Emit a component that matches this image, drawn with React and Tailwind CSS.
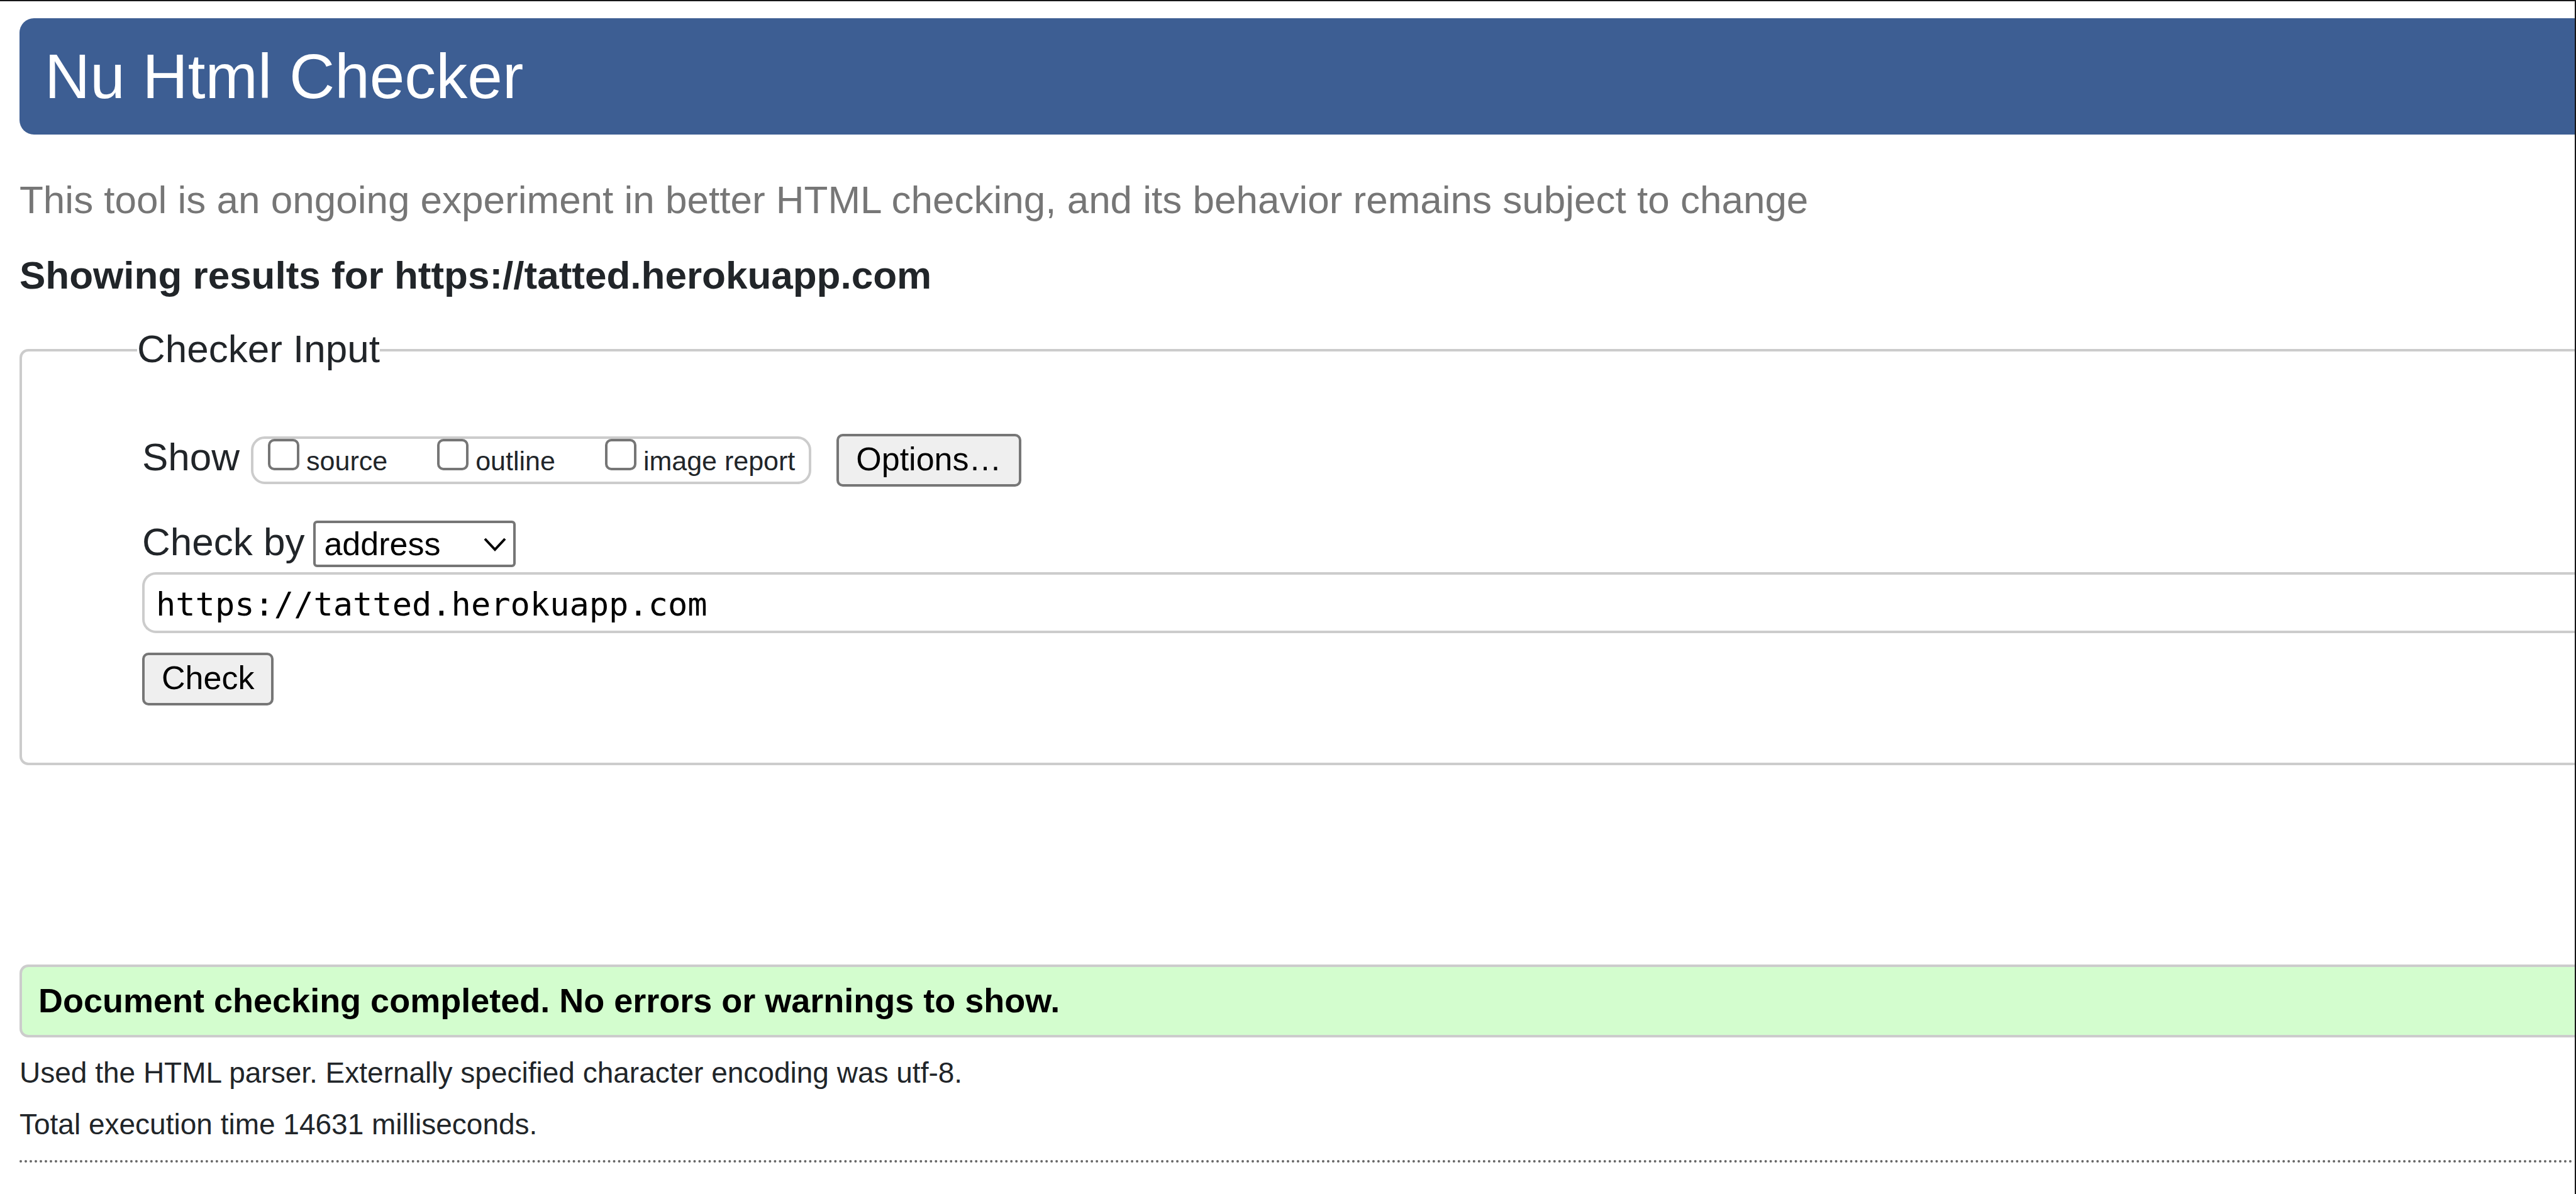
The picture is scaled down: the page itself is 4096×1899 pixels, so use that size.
import { useState } from "react";

const BUTTON =
  "shrink-0 rounded-[10px] border-4 border-[#767676] bg-[#efefef] px-[27px] pt-[6px] pb-[10px] text-[52px] leading-[60px] text-black";

function ShowOption({ id, label }) {
  return (
    <label htmlFor={id} className="flex items-baseline gap-[11px]">
      <input
        id={id}
        type="checkbox"
        className="size-[50px] shrink-0 appearance-none rounded-[10px] border-4 border-[#767676] bg-white checked:bg-[#0075ff]"
      />
      <span className="text-[43px] leading-[52px]">{label}</span>
    </label>
  );
}

function CheckerForm() {
  const [address, setAddress] = useState("https://tatted.herokuapp.com");
  return (
    <form onSubmit={(e) => e.preventDefault()} className="mt-9">
      <fieldset className="rounded-l-[14px] border-4 border-r-0 border-[#cccccc] pt-[95px] pb-[91px] pl-[183px]">
        <legend className="pb-1 text-[62px] leading-[72px]">Checker Input</legend>
        <div className="pl-2">
          <div className="flex items-baseline">
            <span className="mr-[18px] text-[62px] leading-[72px]">Show</span>
            <div className="mr-10 flex items-baseline gap-[79px] rounded-[22px] border-4 border-[#cccccc] pr-[22px] pb-[7px] pl-[23px]">
              <ShowOption id="show-source" label="source" />
              <ShowOption id="show-outline" label="outline" />
              <ShowOption id="show-image-report" label="image report" />
            </div>
            <button type="button" className={BUTTON}>
              Options…
            </button>
          </div>

          <div className="mt-[54px] flex items-baseline gap-[14px]">
            <label htmlFor="check-by" className="text-[62px] leading-[60px]">
              Check by
            </label>
            <div className="relative">
              <select
                id="check-by"
                defaultValue="address"
                className="block w-[322px] appearance-none rounded-[6px] border-4 border-[#767676] bg-white py-[3px] pr-[60px] pl-[13px] text-[52px] leading-[60px] text-black"
              >
                <option value="address">address</option>
                <option value="file">file upload</option>
                <option value="text">text input</option>
              </select>
              <svg
                aria-hidden="true"
                viewBox="0 0 36 22"
                className="pointer-events-none absolute top-[27px] right-[15px] h-[22px] w-[36px]"
              >
                <path d="M2 2 L18 19 L34 2" fill="none" stroke="#000" strokeWidth="4" />
              </svg>
            </div>
          </div>

          <input
            type="text"
            aria-label="Address of page to check"
            value={address}
            onChange={(e) => setAddress(e.target.value)}
            spellCheck={false}
            className="mt-2 block h-[97px] w-full rounded-l-[22px] border-4 border-r-0 border-[#cccccc] bg-white pt-[5px] pl-[18px] font-['DejaVu_Sans_Mono',monospace] text-[52px] text-black"
          />

          <button type="submit" className={BUTTON + " mt-[31px] block"}>
            Check
          </button>
        </div>
      </fieldset>
    </form>
  );
}

export default function App() {
  return (
    <div className="min-h-screen overflow-hidden border-t-2 border-r-2 border-[#161618] bg-white pt-[27px] pl-[31px] font-['Liberation_Sans',Arial,sans-serif] text-[#212529]">
      <header className="rounded-l-[23px] bg-[#3d5e93] py-[35px] pl-10">
        <h1 className="text-[100px] leading-[115px] text-white">Nu Html Checker</h1>
      </header>

      <main>
        <p className="mt-[59px] text-[62px] leading-[90px] text-[#767676]">
          This tool is an ongoing experiment in better HTML checking, and its behavior remains subject to change
        </p>
        <h2 className="mt-[30px] text-[62px] leading-[90px] font-bold">
          Showing results for https://tatted.herokuapp.com
        </h2>

        <CheckerForm />

        <p className="mt-[317px] rounded-l-[14px] border-4 border-r-0 border-[#cccccc] bg-[#d3fdce] pt-[3px] pb-[5px] pl-[26px] text-[54px] leading-[100px] font-bold text-black">
          Document checking completed. No errors or warnings to show.
        </p>

        <div className="mt-[15px] text-[46px] leading-[82px]">
          <p>Used the HTML parser. Externally specified character encoding was utf-8.</p>
          <p>Total execution time 14631 milliseconds.</p>
        </div>
        <hr className="mt-4 border-t-4 border-dotted border-[#666666]" />
      </main>
    </div>
  );
}
